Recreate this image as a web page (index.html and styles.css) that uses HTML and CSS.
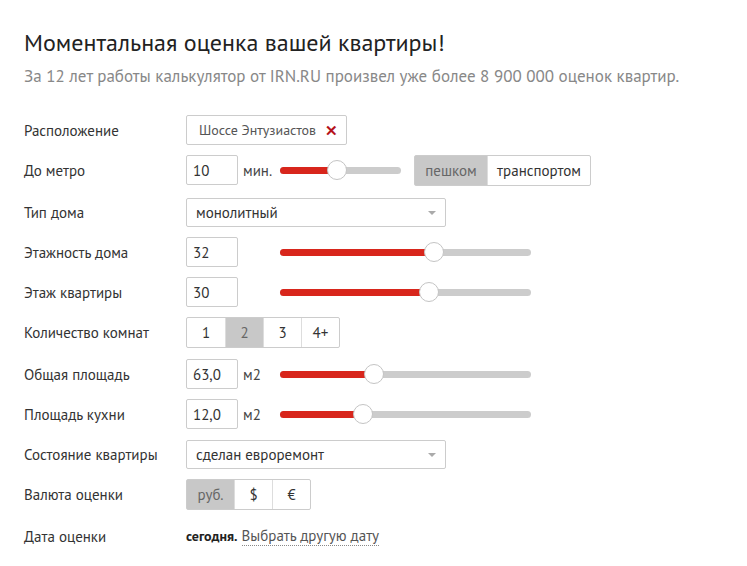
FILE: index.html
```html
<!DOCTYPE html>
<html lang="ru">
<head>
<meta charset="utf-8">
<link rel="stylesheet" href="styles.css">
</head>
<body>
<div class="page">
  <h1 class="title">Моментальная оценка вашей квартиры!</h1>
  <p class="subtitle">За 12 лет работы калькулятор от IRN.RU произвел уже более 8 900 000 оценок квартир.</p>

  <div class="form">
    <div class="row">
      <div class="label">Расположение</div>
      <div class="field">
        <div class="tag">Шоссе Энтузиастов <span class="tag-x">✕</span></div>
      </div>
    </div>

    <div class="row">
      <div class="label">До метро</div>
      <div class="field">
        <div class="num">10</div>
        <span class="unit">мин.</span>
        <div class="slider short"><div class="fill" style="width:47%"></div><div class="knob" style="left:47%"></div></div>
        <div class="btns mode">
          <span class="btn active">пешком</span><span class="btn">транспортом</span>
        </div>
      </div>
    </div>

    <div class="row gap2">
      <div class="label">Тип дома</div>
      <div class="field">
        <div class="select">монолитный<span class="caret"></span></div>
      </div>
    </div>

    <div class="row">
      <div class="label">Этажность дома</div>
      <div class="field">
        <div class="num">32</div>
        <span class="unit"></span>
        <div class="slider"><div class="fill" style="width:61.5%"></div><div class="knob" style="left:61.5%"></div></div>
      </div>
    </div>

    <div class="row">
      <div class="label">Этаж квартиры</div>
      <div class="field">
        <div class="num">30</div>
        <span class="unit"></span>
        <div class="slider"><div class="fill" style="width:59.5%"></div><div class="knob" style="left:59.5%"></div></div>
      </div>
    </div>

    <div class="row">
      <div class="label">Количество комнат</div>
      <div class="field">
        <div class="btns rooms">
          <span class="btn">1</span><span class="btn active">2</span><span class="btn">3</span><span class="btn">4+</span>
        </div>
      </div>
    </div>

    <div class="row gap2">
      <div class="label">Общая площадь</div>
      <div class="field">
        <div class="num">63,0</div>
        <span class="unit">м2</span>
        <div class="slider"><div class="fill" style="width:37.5%"></div><div class="knob" style="left:37.5%"></div></div>
      </div>
    </div>

    <div class="row">
      <div class="label">Площадь кухни</div>
      <div class="field">
        <div class="num">12,0</div>
        <span class="unit">м2</span>
        <div class="slider"><div class="fill" style="width:33%"></div><div class="knob" style="left:33%"></div></div>
      </div>
    </div>

    <div class="row">
      <div class="label">Состояние квартиры</div>
      <div class="field">
        <div class="select">сделан евроремонт<span class="caret"></span></div>
      </div>
    </div>

    <div class="row">
      <div class="label">Валюта оценки</div>
      <div class="field">
        <div class="btns cur">
          <span class="btn active">руб.</span><span class="btn">$</span><span class="btn">€</span>
        </div>
      </div>
    </div>

    <div class="row gap2">
      <div class="label">Дата оценки</div>
      <div class="field">
        <b class="today">сегодня.</b>&nbsp;<span class="pick">Выбрать другую дату</span>
      </div>
    </div>
  </div>
</div>
</body>
</html>
```

FILE: styles.css
```css
* { box-sizing: border-box; }
html, body { margin: 0; padding: 0; background: #fff; }
body {
  font-family: "PT Sans", Roboto, "Liberation Sans", sans-serif;
  color: #333;
  font-size: 15px;
}
.page { padding: 28px 24px 0 24px; }
.title {
  margin: 0;
  font-weight: normal;
  font-size: 24px;
  line-height: 30px;
  color: #222;
}
.subtitle {
  margin: 7px 0 0 0;
  font-size: 17px;
  line-height: 22px;
  color: #888;
}
.form {
  margin-top: 28px;
  display: flex;
  flex-direction: column;
  gap: 10px;
}
.row {
  display: grid;
  grid-template-columns: 162px 1fr;
  align-items: center;
  height: 30px;
}
.row.gap2 { margin-top: 2px; }
.label { font-size: 15px; color: #333; }
.field { display: flex; align-items: center; height: 30px; }
.tag {
  height: 30px;
  width: 161px;
  border: 1px solid #ccc;
  border-radius: 2px;
  display: flex;
  align-items: center;
  padding-left: 12px;
  font-size: 14px;
  color: #555;
}
.tag-x { color: #b5121b; font-weight: bold; margin-left: 9px; font-size: 15px; }
.num {
  width: 52px;
  height: 30px;
  border: 1px solid #ccc;
  border-radius: 2px;
  display: flex;
  align-items: center;
  padding-left: 6px;
  font-size: 15px;
  color: #333;
}
.unit { width: 42px; padding-left: 5px; font-size: 15px; color: #444; }
.slider {
  position: relative;
  width: 251px;
  height: 7px;
  background: #ccc;
  border-radius: 4px;
}
.slider.short { width: 121px; }
.fill {
  position: absolute;
  left: 0; top: 0; bottom: 0;
  background: #d8261c;
  border-radius: 4px 0 0 4px;
}
.knob {
  position: absolute;
  top: 50%;
  width: 20px;
  height: 20px;
  margin: -10px 0 0 -10px;
  border-radius: 50%;
  background: #fff;
  border: 1px solid #c4c4c4;
}
.btns { display: flex; height: 31px; border: 1px solid #ccc; border-radius: 2px; }
.btn {
  display: flex;
  align-items: center;
  justify-content: center;
  font-size: 15px;
  color: #333;
  border-left: 1px solid #ddd;
}
.btn:first-child { border-left: 0; }
.btn.active { background: #c8c8c8; color: #666; }
.mode { margin-left: 13px; }
.mode .btn:first-child { width: 72px; }
.mode .btn:last-child { width: 103px; }
.rooms .btn { width: 38px; }
.cur .btn { width: 38px; }
.cur .btn:first-child { width: 47px; }
.select {
  position: relative;
  width: 260px;
  height: 29px;
  border: 1px solid #ccc;
  border-radius: 2px;
  display: flex;
  align-items: center;
  padding-left: 9px;
  font-size: 15px;
  color: #333;
}
.caret {
  position: absolute;
  right: 9px;
  top: 12px;
  border-left: 4px solid transparent;
  border-right: 4px solid transparent;
  border-top: 4px solid #aaa;
}
.today { font-weight: bold; font-size: 14px; color: #222; }
.pick { color: #555; border-bottom: 1px dotted #888; line-height: 18px; }
```
